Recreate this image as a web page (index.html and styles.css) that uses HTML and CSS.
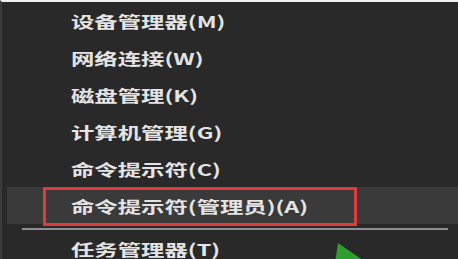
FILE: index.html
```html
<!DOCTYPE html>
<html lang="zh">
<head>
<meta charset="utf-8">
<title>菜单</title>
<link rel="stylesheet" href="styles.css">
</head>
<body>
<div class="frame">
  <ul class="menu">
    <li class="item"><span class="label">设备管理器(M)</span></li>
    <li class="item"><span class="label">网络连接(W)</span></li>
    <li class="item"><span class="label">磁盘管理(K)</span></li>
    <li class="item"><span class="label">计算机管理(G)</span></li>
    <li class="item"><span class="label">命令提示符(C)</span></li>
    <li class="item active"><span class="label">命令提示符(管理员)(A)</span><span class="mark"></span></li>
    <li class="sep"></li>
    <li class="item last"><span class="label">任务管理器(T)</span></li>
  </ul>
  <svg class="arrow" width="40" height="20" viewBox="0 0 40 20"><polygon points="7,0 4,20 36,20" fill="#2f9e2f"/></svg>
</div>
</body>
</html>
```
FILE: styles.css
```css
html, body {
  margin: 0;
  padding: 0;
  background: #2a2a2a;
  overflow: hidden;
}
.frame {
  position: relative;
  width: 458px;
  height: 259px;
  box-sizing: border-box;
  border-top: 2px solid #f0f0f0;
  border-left: 2px solid #3c3c3c;
  background: #292929;
  overflow: hidden;
}
.menu {
  list-style: none;
  margin: 0 0 0 5px;
  padding: 0;
  font-family: "Noto Sans CJK SC", "Noto Sans", sans-serif;
  font-size: 16px;
  font-weight: bold;
  color: #e4e4e4;
}
.item {
  position: relative;
  height: 37px;
  display: flex;
  align-items: center;
  padding-left: 64px;
}
.item.last {
  height: 25px;
  align-items: flex-end;
  padding-bottom: 1px;
}
.label {
  display: inline-block;
  transform: scaleX(1.46);
  transform-origin: left center;
  line-height: 1;
  white-space: nowrap;
}
.active {
  background: #3a3a3a;
}
.mark {
  position: absolute;
  left: 36px;
  top: 0;
  width: 314px;
  height: 39px;
  box-sizing: border-box;
  border: 3px solid #e23a3a;
}
.sep {
  height: 1.5px;
  background: #8e8e8e;
  margin: 4px 10px 2.5px 15px;
}
.arrow {
  position: absolute;
  left: 329px;
  top: 241px;
}
```
